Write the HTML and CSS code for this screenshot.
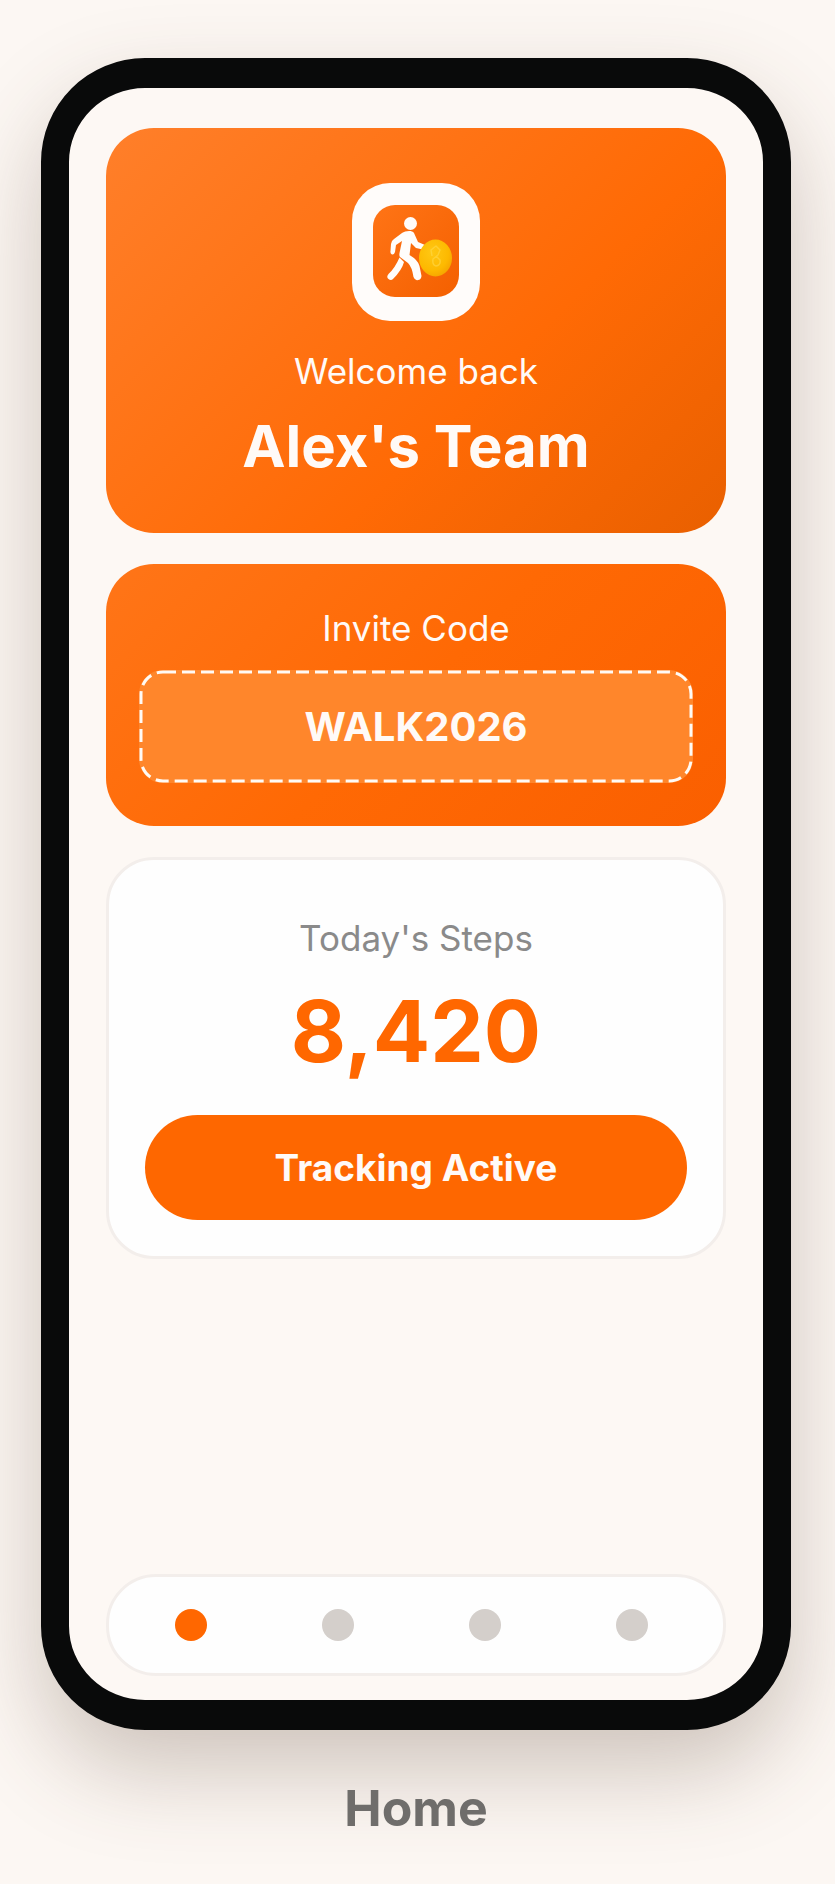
FILE: index.html
```
<!DOCTYPE html>
<html lang="en">
<head>
    <meta charset="UTF-8">
    <meta name="viewport" content="width=device-width, initial-scale=1.0">
    <title>Home</title>
    <link rel="stylesheet" href="styles.css">
</head>
<body>
    <main class="phone">
        <section class="card welcome-card">
            <div class="logo">
                <svg viewBox="0 0 128 138" aria-hidden="true">
                    <defs>
                        <linearGradient id="tile" x1="0" y1="0" x2="1" y2="1">
                            <stop offset="0" stop-color="#ff7416"/>
                            <stop offset="1" stop-color="#f46000"/>
                        </linearGradient>
                        <radialGradient id="coin" cx="0.4" cy="0.35" r="0.7">
                            <stop offset="0" stop-color="#ffc814"/>
                            <stop offset="0.7" stop-color="#fdb900"/>
                            <stop offset="1" stop-color="#f5a400"/>
                        </radialGradient>
                    </defs>
                    <rect x="21" y="22" width="86" height="92" rx="22" fill="url(#tile)"/>
                    <!-- walker -->
                    <circle cx="58.5" cy="40.5" r="6.5" fill="#fffdfb"/>
                    <path d="M50 50 C53 48 60 47 62 50 L66 59 L73 62 V67 L64 65 L59 60 L57.5 72 Q66 77 67.500 83 L69.500 93 Q69 97 66 97 Q63 98 61.5 94 Q60 84 56 80 L48 74 Q47 73 47.5 70 L50 58 L44 62 L43 69 Q42 72 40 71.5 Q38 71 38.5 68 L39 61 Q39 58 42 56 Z" fill="#fffdfb"/>
                    <path d="M47.5 74.5 L52 79 Q50 87 41 96 Q39 98 36.5 96 Q34 94 36.5 91 Q43 85 47.5 74.5 Z" fill="#fffdfb"/>
                    <!-- coin -->
                    <ellipse cx="83.5" cy="75" rx="16.5" ry="18.5" fill="url(#coin)"/>
                    <path d="M80 73 L79 67 L84 63 L88 67 L86 72 L81 76 Q80 82 84 83 Q89 82 88 77 L84 73" fill="none" stroke="#ffd84a" stroke-opacity="0.6" stroke-width="1.5" stroke-linejoin="round"/>
                </svg>
            </div>
            <p class="label">Welcome back</p>
            <h1>Alex's Team</h1>
        </section>

        <section class="card invite-card">
            <p class="label">Invite Code</p>
            <div class="code">
                <svg class="code-border" aria-hidden="true">
                    <rect width="100%" height="100%" rx="22"/>
                </svg>
                <strong>WALK2026</strong>
            </div>
        </section>

        <section class="card steps-card">
            <p class="label">Today's Steps</p>
            <p class="steps">8,420</p>
            <button type="button" class="tracking">Tracking Active</button>
        </section>

        <nav class="tabs">
            <a href="#home" class="tab active" aria-label="Home"></a>
            <a href="#team" class="tab" aria-label="Team"></a>
            <a href="#rewards" class="tab" aria-label="Rewards"></a>
            <a href="#profile" class="tab" aria-label="Profile"></a>
        </nav>
    </main>
    <h2 class="caption">Home</h2>
</body>
</html>
```
FILE: styles.css
```
* {
    box-sizing: border-box;
    margin: 0;
    padding: 0;
}
body {
    display: flex;
    flex-direction: column;
    min-height: 100vh;
    padding: 58px 44px 46px 41px;
    background-color: #fcf7f3;
    font-family: Inter, "Liberation Sans", sans-serif;
    text-align: center;
    overflow-x: hidden;
}
.phone {
    flex: 1;
    display: flex;
    flex-direction: column;
    gap: 31px;
    padding: 40px 37px 24px;
    border: 30px solid #090a0a;
    border-left-width: 28px;
    border-right-width: 28px;
    border-radius: 104px;
    background-color: #fdf8f4;
    box-shadow: 0 40px 90px rgba(90, 65, 45, 0.28);
}
.card {
    border-radius: 48px;
}
.label {
    font-size: 35px;
    line-height: 44px;
}
.welcome-card {
    padding: 55px 32px 51px;
    background: linear-gradient(135deg, #ff7f2a 0%, #ff6a05 62%, #e96000 100%);
    color: #fffaf7;
}
.logo {
    width: 128px;
    height: 138px;
    margin: 0 auto 28px;
    border-radius: 38px;
    background-color: #fffcfa;
}
.logo svg {
    display: block;
    width: 100%;
}
h1 {
    margin-top: 17px;
    font-size: 58px;
    line-height: 72px;
}
.invite-card {
    padding: 42px 33px 43px;
    background: linear-gradient(135deg, #ff7518 0%, #ff6904 50%, #fa5f00 100%);
    color: #fffaf7;
}
.code {
    position: relative;
    margin-top: 20px;
    padding: 32px 20px;
    border-radius: 24px;
    background-color: #ff862b;
    font-size: 40px;
    line-height: 49px;
}
.code-border {
    position: absolute;
    top: 2px;
    left: 2px;
    width: calc(100% - 4px);
    height: calc(100% - 4px);
    overflow: visible;
}
.code-border rect {
    fill: none;
    stroke: #fffaf5;
    stroke-width: 3;
    stroke-dasharray: 13 6;
}
.steps-card {
    padding: 56px 36px 36px;
    border: 3px solid #f3eeeb;
    background-color: #fefefe;
    color: #8a8a8a;
}
.steps {
    margin: 20px 0 31px;
    color: #ff6700;
    font-size: 85px;
    font-weight: 700;
    line-height: 104px;
}
.tracking {
    display: block;
    width: 100%;
    padding: 29px 20px;
    border: none;
    border-radius: 53px;
    background-color: #fe6700;
    color: #fffaf7;
    font-family: inherit;
    font-size: 37px;
    font-weight: 700;
    line-height: 47px;
    cursor: pointer;
}
.tabs {
    display: flex;
    justify-content: space-between;
    margin-top: auto;
    padding: 32px 75px 32px 66px;
    border: 3px solid #f3eeeb;
    border-radius: 50px;
    background-color: #fefefe;
}
.tab {
    width: 32px;
    height: 32px;
    border-radius: 50%;
    background-color: #d4cfcb;
}
.tab.active {
    background-color: #ff6700;
}
.caption {
    margin-top: 48px;
    color: #6f6d6b;
    font-size: 50px;
    line-height: 60px;
    z-index: 1;
}
```
